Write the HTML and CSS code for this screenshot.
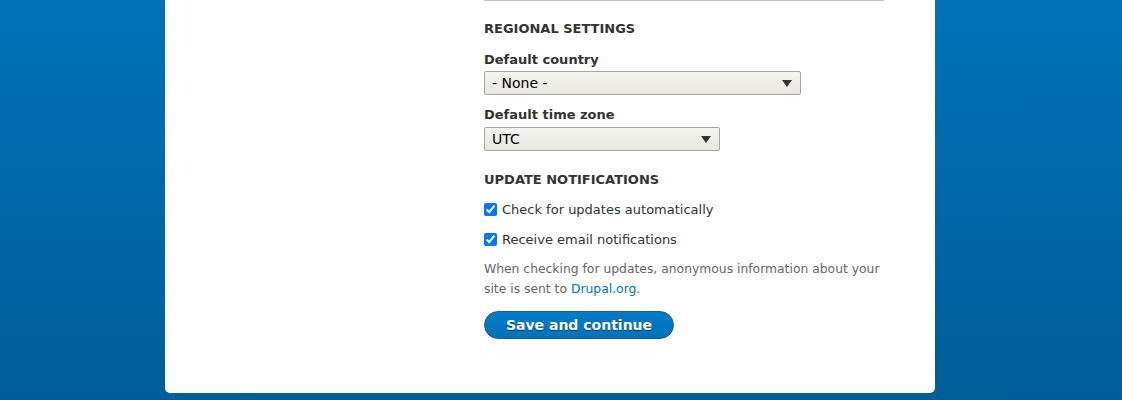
FILE: index.html
```html
<!DOCTYPE html>
<html lang="en">
<head>
<meta charset="utf-8">
<title>Configure site</title>
<link rel="stylesheet" href="styles.css">
</head>
<body>
<div class="page">
  <div class="card">
    <div class="sidebar"></div>
    <form class="form">
      <div class="rule"></div>
      <fieldset class="group">
        <legend class="legend">Regional settings</legend>
        <div class="item">
          <label class="label">Default country</label>
          <div class="select select-country"><span>- None -</span><i class="arrow"></i></div>
        </div>
        <div class="item item-tz">
          <label class="label">Default time zone</label>
          <div class="select select-tz"><span>UTC</span><i class="arrow"></i></div>
        </div>
      </fieldset>
      <fieldset class="group group-updates">
        <legend class="legend">Update notifications</legend>
        <label class="check"><input type="checkbox" checked><span>Check for updates automatically</span></label>
        <label class="check check-last"><input type="checkbox" checked><span>Receive email notifications</span></label>
        <p class="desc">When checking for updates, anonymous information about your site is sent to <a href="#">Drupal.org</a>.</p>
      </fieldset>
      <div class="actions"><button type="button" class="button">Save and continue</button></div>
    </form>
  </div>
</div>
</body>
</html>
```

FILE: styles.css
```css
html, body {
  margin: 0;
  padding: 0;
}
body {
  height: 400px;
  overflow: hidden;
  background: linear-gradient(to bottom, #0072b9 0%, #005d98 100%);
  font-family: "DejaVu Sans", Verdana, sans-serif;
  color: #333;
}
.page {
  padding-left: 165px;
}
.card {
  width: 770px;
  background: #fff;
  border-radius: 0 0 5px 5px;
  display: grid;
  grid-template-columns: 319px 400px;
  padding-bottom: 54px;
}
.form {
  margin: 0;
}
.rule {
  height: 1px;
  background: #c0c0c0;
}
.group {
  border: 0;
  margin: 0;
  padding: 0;
  min-width: 0;
}
.legend {
  padding: 0;
  margin: 0;
  float: left;
  width: 100%;
  font-size: 13px;
  line-height: 18px;
  font-weight: bold;
  text-transform: uppercase;
  margin-top: 19px;
  margin-bottom: 13px;
}
.item {
  clear: both;
  margin-bottom: 11px;
}
.label {
  display: block;
  font-size: 13px;
  line-height: 18px;
  font-weight: bold;
  margin-bottom: 2px;
}
.item-tz .label {
  margin-bottom: 3px;
}
.select {
  box-sizing: border-box;
  height: 24px;
  border: 1px solid #a6a6a6;
  border-radius: 2px;
  background: linear-gradient(to bottom, #f4f4f0, #e8e7e1);
  display: flex;
  align-items: center;
  justify-content: space-between;
  padding: 0 8px 0 7px;
  font-size: 14px;
  color: #000;
}
.select-country { width: 317px; }
.select-tz { width: 236px; }
.arrow {
  width: 0;
  height: 0;
  border-left: 5px solid transparent;
  border-right: 5px solid transparent;
  border-top: 7px solid #333;
  margin-top: 1px;
}
.group-updates .legend {
  margin-top: 9px;
  margin-bottom: 12px;
}
.check {
  clear: both;
  display: flex;
  align-items: center;
  font-size: 13px;
  line-height: 18px;
  margin-bottom: 12px;
}
.check-last {
  margin-bottom: 10px;
}
.check input {
  width: 13px;
  height: 13px;
  margin: -2px 5px 0 0;
}
.desc {
  margin: 0;
  font-size: 12.35px;
  line-height: 20px;
  color: #666;
}
.desc a {
  color: #0074bd;
  text-decoration: none;
}
.actions {
  margin-top: 12px;
}
.button {
  box-sizing: border-box;
  height: 28px;
  width: 190px;
  border: 1px solid #1e5c90;
  border-radius: 20px;
  background: linear-gradient(to bottom, #007bc6, #0071b8);
  color: #fff;
  font-family: "DejaVu Sans", Verdana, sans-serif;
  font-weight: bold;
  font-size: 14px;
  text-shadow: 0 1px rgba(0,0,0,0.5);
  padding: 0;
}
```
